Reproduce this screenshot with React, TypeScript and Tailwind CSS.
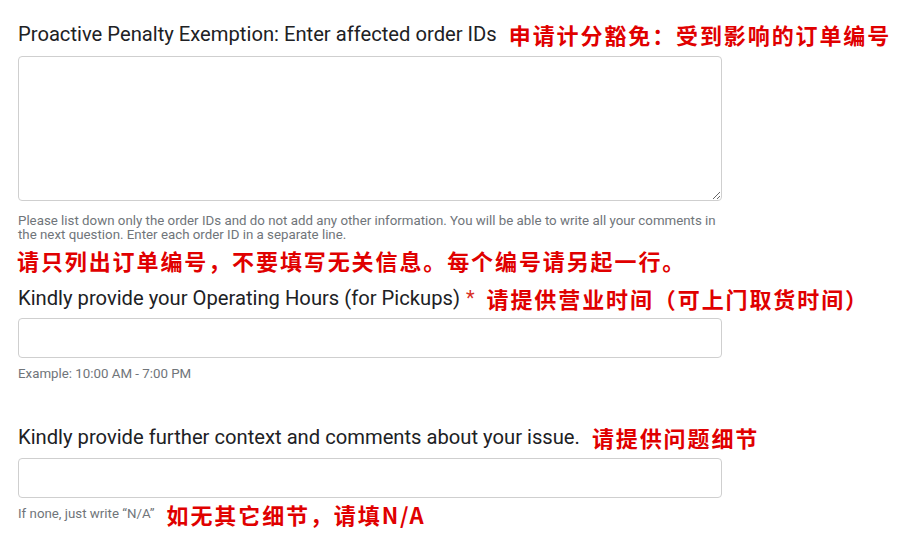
const latin = "font-['Roboto','Liberation_Sans',sans-serif]";
const cjk = "font-['Noto_Sans_CJK_SC','Noto_Sans',sans-serif] font-bold text-[#e00000] text-[22px] leading-[28px] tracking-[1.9px]";

function Label({ text, required, note }: { text: string; required?: boolean; note: string }) {
  return (
    <div className="flex h-[28px] items-center whitespace-nowrap">
      <span className={`${latin} text-[20.2px] leading-[24px] text-[#202124]`}>{text}</span>
      {required && <span className={`${latin} ml-[6px] text-[20px] text-[#d93025]`}>*</span>}
      <span className={`${cjk} ml-[12px]`}>{note}</span>
    </div>
  );
}

export default function App() {
  return (
    <div className="h-[553px] w-[904px] overflow-hidden bg-white pl-[18px] pt-[20px]">
      <Label text="Proactive Penalty Exemption: Enter affected order IDs" note="申请计分豁免：受到影响的订单编号" />
      <textarea className="mt-[8px] block h-[145px] w-[704px] resize-y rounded-[4px] border border-[#cfcfcf] bg-white" />
      <p className={`${latin} mt-[13px] w-[706px] text-[13.3px] leading-[14px] text-[#70757a]`}>
        Please list down only the order IDs and do not add any other information. You will be able to write all your comments in the next question. Enter each order ID in a separate line.
      </p>
      <p className={`${cjk} -ml-[1px] mt-[4px]`}>请只列出订单编号，不要填写无关信息。每个编号请另起一行。</p>

      <div className="mt-[10px]">
        <Label text="Kindly provide your Operating Hours (for Pickups)" required note="请提供营业时间（可上门取货时间）" />
      </div>
      <input className="mt-[6px] block h-[40px] w-[704px] rounded-[4px] border border-[#cfcfcf] bg-white" />
      <p className={`${latin} mt-[9px] text-[13.3px] leading-[14px] text-[#70757a]`}>Example: 10:00 AM - 7:00 PM</p>

      <div className="mt-[42px]">
        <Label text="Kindly provide further context and comments about your issue." note="请提供问题细节" />
      </div>
      <input className="mt-[7px] block h-[40px] w-[704px] rounded-[4px] border border-[#cfcfcf] bg-white" />
      <div className="mt-[2px] flex h-[28px] items-center whitespace-nowrap">
        <span className={`${latin} text-[13.3px] text-[#70757a]`}>If none, just write “N/A”</span>
        <span className={`${cjk} ml-[12px]`}>如无其它细节，请填N/A</span>
      </div>
    </div>
  );
}
